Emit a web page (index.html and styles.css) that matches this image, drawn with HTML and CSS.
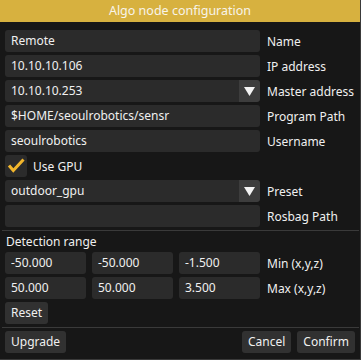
FILE: index.html
```html
<!DOCTYPE html>
<html>
<head>
<meta charset="utf-8">
<link rel="stylesheet" href="styles.css">
</head>
<body>
<div class="window">
  <div class="title">Algo node configuration</div>
  <div class="content">
    <div class="row"><div class="field">Remote</div><span class="label">Name</span></div>
    <div class="row"><div class="field">10.10.10.106</div><span class="label">IP address</span></div>
    <div class="row"><div class="field combo"><span class="val">10.10.10.253</span><span class="arrow"><svg width="11" height="9" viewBox="0 0 11 9"><polygon points="0,0 11,0 5.5,9" fill="#f4f4f4"/></svg></span></div><span class="label">Master address</span></div>
    <div class="row"><div class="field">$HOME/seoulrobotics/sensr</div><span class="label">Program Path</span></div>
    <div class="row"><div class="field">seoulrobotics</div><span class="label">Username</span></div>
    <div class="check-row"><span class="checkbox"><svg width="22" height="22" viewBox="0 0 22 22"><polyline points="4,10.5 8.3,15.5 18.5,4.5" fill="none" stroke="#f2b62c" stroke-width="3" stroke-linecap="butt" stroke-linejoin="miter"/></svg></span><span class="check-label">Use GPU</span></div>
    <div class="row"><div class="field combo"><span class="val">outdoor_gpu</span><span class="arrow"><svg width="11" height="9" viewBox="0 0 11 9"><polygon points="0,0 11,0 5.5,9" fill="#f4f4f4"/></svg></span></div><span class="label">Preset</span></div>
    <div class="row"><div class="field"></div><span class="label">Rosbag Path</span></div>
    <div class="sep"></div>
    <div class="section">Detection range</div>
    <div class="row"><div class="triple"><div class="field">-50.000</div><div class="field">-50.000</div><div class="field">-1.500</div></div><span class="label">Min (x,y,z)</span></div>
    <div class="row"><div class="triple"><div class="field">50.000</div><div class="field">50.000</div><div class="field">3.500</div></div><span class="label">Max (x,y,z)</span></div>
    <div class="btn-row"><button class="btn">Reset</button></div>
    <div class="sep"></div>
    <div class="btn-row footer"><button class="btn">Upgrade</button><span class="spacer"></span><button class="btn">Cancel</button><button class="btn">Confirm</button></div>
  </div>
</div>
</body>
</html>
```
FILE: styles.css
```css
html, body {
  margin: 0;
  padding: 0;
  background: #161616;
}
body {
  font-family: "Noto Sans", "Open Sans", sans-serif;
  font-size: 12px;
  color: #f0f0f0;
}
.window {
  width: 361px;
  height: 360px;
  box-sizing: border-box;
  background: #171717;
  border-right: 1px solid #3a3a3a;
  border-bottom: 1px solid #3a3a3a;
}
.title {
  height: 22px;
  background: #d7b13f;
  color: #f8f4ea;
  text-align: center;
  line-height: 22px;
  font-size: 12.5px;
}
.content {
  padding: 8px 0 0 5px;
  display: flex;
  flex-direction: column;
  gap: 3px;
}
.row {
  display: flex;
  align-items: center;
  height: 22px;
  gap: 7px;
}
.field {
  width: 255px;
  height: 22px;
  box-sizing: border-box;
  background: #2b2b2b;
  border-radius: 3px;
  padding-left: 6px;
  line-height: 22px;
  white-space: nowrap;
  overflow: hidden;
}
.combo {
  display: flex;
  padding-left: 0;
}
.combo .val {
  flex: 1;
  padding-left: 6px;
}
.arrow {
  width: 21px;
  height: 22px;
  background: #3d3d3d;
  border-radius: 0 3px 3px 0;
  display: flex;
  align-items: center;
  justify-content: center;
}
.label {
  white-space: nowrap;
}
.check-row {
  display: flex;
  align-items: center;
  height: 22px;
  gap: 6px;
}
.checkbox {
  width: 22px;
  height: 22px;
  background: #2b2b2b;
  border-radius: 3px;
  display: block;
}
.checkbox svg { display: block; }
.sep {
  height: 1px;
  background: #3a3a3a;
  margin-left: -3px;
  margin-right: 1px;
}
.section {
  height: 15px;
  line-height: 15px;
  margin-left: 1px;
}
.triple {
  display: flex;
  gap: 6px;
  width: 255px;
}
.triple .field {
  width: 81px;
}
.btn-row {
  display: flex;
  height: 22px;
  gap: 6px;
  padding-right: 5px;
}
.spacer { flex: 1; }
.btn {
  font: inherit;
  color: #f0f0f0;
  background: #313131;
  border: none;
  border-radius: 3px;
  height: 22px;
  padding: 0 6px;
  line-height: 22px;
}
```
